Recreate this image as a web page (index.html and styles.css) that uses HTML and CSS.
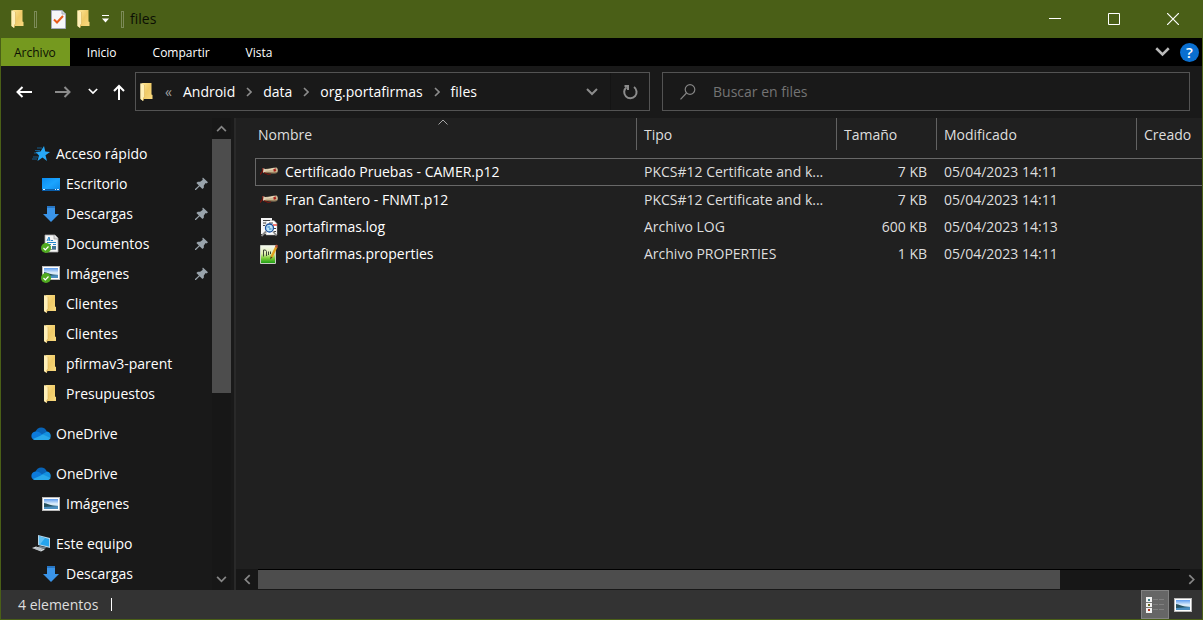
FILE: index.html
```html
<!DOCTYPE html>
<html lang="es">
<head>
<meta charset="utf-8">
<meta name="viewport" content="width=device-width, initial-scale=1">
<title>files</title>
<link rel="stylesheet" href="styles.css">
</head>
<body>
<svg class="defs" aria-hidden="true">
  <defs>
    <linearGradient id="gFolder" x1="0" x2="1" y1="0" y2="1"><stop offset="0" stop-color="#ffe89a"/><stop offset=".5" stop-color="#f0cb68"/><stop offset="1" stop-color="#fbdc83"/></linearGradient>
    <linearGradient id="gBlue" x1="0" x2="1" y1="0" y2="1"><stop offset="0" stop-color="#0a8cf0"/><stop offset=".5" stop-color="#1ba4ff"/><stop offset="1" stop-color="#0b86e6"/></linearGradient>
    <linearGradient id="gSky" x1="0" x2="0" y1="0" y2="1"><stop offset="0" stop-color="#5b9bef"/><stop offset=".5" stop-color="#e3f1fb"/><stop offset="1" stop-color="#7fb0d8"/></linearGradient>
    <linearGradient id="gGreen" x1="0" x2="0" y1="0" y2="1"><stop offset="0" stop-color="#f6f8f2"/><stop offset=".45" stop-color="#dff0b0"/><stop offset=".7" stop-color="#7fce3a"/><stop offset="1" stop-color="#159a12"/></linearGradient>
    <symbol id="folder" viewBox="0 0 12 18"><path d="M2 0H11V11.500L12 12V16H3V18L0 16V1Z" fill="url(#gFolder)"/><path d="M0 0L4 2.500V14L2.500 15V18L0 16Z" fill="#fff0b8"/><path d="M4 2V14L3 15V17" fill="none" stroke="#d9b45b" stroke-width=".6"/></symbol>
    <symbol id="chev-right" viewBox="0 0 6 10"><path d="M1 1L5 5L1 9" fill="none" stroke="currentColor" stroke-width="1.600"/></symbol>
    <symbol id="chev-down" viewBox="0 0 12 8"><path d="M1 1L6 6L11 1" fill="none" stroke="currentColor" stroke-width="2"/></symbol>
    <symbol id="chev-up" viewBox="0 0 12 8"><path d="M1 7L6 2L11 7" fill="none" stroke="currentColor" stroke-width="2"/></symbol>
    <symbol id="arrow" viewBox="0 0 16 12"><path d="M16 6H1.500M6.500 1L1.500 6L6.500 11" fill="none" stroke="currentColor" stroke-width="2"/></symbol>
    <symbol id="pin" viewBox="0 0 14 14"><path d="M8.500 0L14 5L12.500 6.500L11.500 6L9.500 8.500V11L8 12.500L5 9.500L1 13.500H0V12.500L4.200 8.500L1.500 5.800L3 4.500H5.500L8.500 2.500L7.800 1.500Z" fill="#99a3ab"/></symbol>
    <symbol id="down" viewBox="0 0 20 20"><path d="M6 2H14V10H18L10 18L2 10H6Z" fill="#3a94e8"/><path d="M6 2H14V4H6Z" fill="#2876c4"/></symbol>
    <symbol id="desktop" viewBox="0 0 20 20"><path d="M1 4H19V17H1Z" fill="url(#gBlue)"/><path d="M1 15H19V17H1Z" fill="#0a5da8"/><path d="M2 15.500H4M14 15.500H15M16 15.500H18" stroke="#d9efff"/></symbol>
    <symbol id="photo" viewBox="0 0 20 20"><path d="M1 3H19V17H1Z" fill="#b9b9b9"/><path d="M2 4H18V16H2Z" fill="#fff"/><path d="M3 5H17V15H3Z" fill="url(#gSky)"/><path d="M3 9C6 9 9 12 17 12V15H3Z" fill="#25505d"/><path d="M3 13L17 12V15H3Z" fill="#4b8fc0"/></symbol>
    <symbol id="check" viewBox="0 0 10 10"><circle cx="5" cy="5" r="5" fill="#50aa20"/><path d="M2.500 5L4.300 6.800L7.500 3.500" fill="none" stroke="#fff" stroke-width="1.200"/></symbol>
    <symbol id="docs" viewBox="0 0 20 20"><path d="M4 1H14L17 4V18H4Z" fill="#f7f7f7" stroke="#a7a7a7" stroke-width=".8"/><path d="M13 1V5H17" fill="#ddd" stroke="#999" stroke-width=".7"/><path d="M6 7L8 3L9 7M6.500 6H9M10 6.500H12M6 8.500H15M6 10.500H10M12 10.500H15" fill="none" stroke="#2486c9"/><path d="M11 12H15V16H11Z" fill="#3f7395"/><path d="M6 12.500H10M6 15.500H15" stroke="#8195a5"/><use href="#check" x="0" y="9" width="10" height="10"/></symbol>
    <symbol id="photo-ok" viewBox="0 0 20 20"><use href="#photo" y="-1" width="20" height="20"/><use href="#check" x="0" y="9" width="10" height="10"/></symbol>
    <symbol id="cloud" viewBox="0 0 20 14"><path d="M4 6C6 -1 14-1 16 5L10 9Z" fill="#0864b8"/><path d="M4.500 13C-1 13-1 5 4.500 4.500C7 4 10 6 11.500 8L5 13Z" fill="#0c7bdc"/><path d="M16 4.500C21 5 21 13 16 13H10L10 8Z" fill="#1490df"/><path d="M2 12L12 7.500L19.500 11C19 12.500 17.500 13 16 13H4.500C3.500 13 2.500 12.500 2 12Z" fill="#28a8ea"/></symbol>
    <symbol id="star" viewBox="0 0 20 20"><path d="M13 2L14.300 7.500L19 8L14.500 11.200L16 17L11.500 13.500L6.500 17L8 11.500L4.500 8L9.500 7.500Z" fill="#27a7f5"/><path d="M6 4H11M4 6.500H9M3 9H7M2 13H7M1 15H6" stroke="#1678bb" stroke-width=".7"/></symbol>
    <symbol id="pc" viewBox="0 0 20 20"><path d="M7 1L19 4V14L7 11Z" fill="#b6d5e8"/><path d="M8 2.300L18 5V12.600L8 10.300Z" fill="#25a4ed"/><path d="M8 2.300L14 4L9 10.500L8 10.300Z" fill="#62c0f3"/><path d="M9 12L16 13.500L13 15L6 13.500Z" fill="#778791"/><path d="M1 14L5 12.500L14 15.500L10 17.500Z" fill="#dce1e4"/><path d="M3 14.200L10 16.500M5 13.500L12 16" stroke="#8f999f" stroke-width=".6"/></symbol>
    <symbol id="cert" viewBox="0 0 18 20"><path d="M4 7C8 7.500 12 5.500 16.500 5.500C18 6.500 18.500 9 17 11C13 12 9 10.500 4.500 11Z" fill="#c9b793"/><path d="M5 8C9 8.500 12 6.500 16 6.500" stroke="#efe2c6" fill="none"/><path d="M5 10.500C9 10 13 11.500 17 10.500" stroke="#8a7350" fill="none"/><path d="M2.500 6C5 5.500 6 9 5 11L3 10.500Z" fill="#e3d2b8"/><path d="M3 6L2.500 9.500L0 12.500M4 10.500L8 12.500L11 12" stroke="#76150f" fill="none" stroke-width="1.200"/><path d="M13.500 7.500L16 9M15.500 6.500L14 9.500" stroke="#a81d17" stroke-width="1.400"/></symbol>
    <symbol id="log" viewBox="0 0 18 20"><path d="M1 1H12V17H1Z" fill="#f4f4f4"/><path d="M6 3.500H14L17 6.500V18H6Z" fill="#fff" stroke="#999" stroke-width=".5"/><path d="M3 3.500H10M3 6H6M3 8.500H5M9 6H13M14 11.500H16M14 14.500H16" stroke="#444"/><path d="M13 8H17" stroke="#e32" stroke-width="1.300"/><circle cx="9.500" cy="11" r="4" fill="#b9e2f8" stroke="#1c4f9a" stroke-width="1.300"/><path d="M7.500 10H10M9 12H11.500" stroke="#2877bd"/><path d="M6 14.500L1.500 19M13 14.500L16.500 18.500" stroke="#8a8a8a" stroke-width="1.800"/></symbol>
    <symbol id="props" viewBox="0 0 18 20"><path d="M.5 1.500H15.500V19.500H.5Z" fill="url(#gGreen)" stroke="#c9cfc3"/><path d="M3.500 12.500V6H5.500L6.500 7.500V12M8.500 7.500V11M10.500 7.500V10" stroke="#3c4436" stroke-width="1" fill="none"/><path d="M16.500 2.500L11.500 13" stroke="#e0a11e" stroke-width="2.400"/><path d="M17 1L16 3.500" stroke="#b9543a" stroke-width="2.200"/><path d="M10.500 12.500L10.200 15.500L12.500 13.300Z" fill="#583c13"/></symbol>
  </defs>
</svg>

<div class="window">
  <header class="titlebar">
    <div class="quick">
      <svg class="i-folder"><use href="#folder"/></svg>
      <span class="grip"></span>
      <button class="plain" aria-label="Propiedades"><svg width="15" height="19" viewBox="0 0 15 19"><path d="M.5.500H11L14.500 4V18.500H.5Z" fill="#f6f7f9" stroke="#a4a9ba"/><path d="M11 .5V4H14.500" fill="#d9dce5" stroke="#a4a9ba"/><path d="M3 9.500L6 12.500L12 6" fill="none" stroke="#e85c1b" stroke-width="2"/></svg></button>
      <button class="plain" aria-label="Nueva carpeta"><svg class="i-folder"><use href="#folder"/></svg></button>
      <button class="plain" aria-label="Personalizar"><svg width="9" height="8" viewBox="0 0 9 8"><path d="M1 .5H8" stroke="#fff"/><path d="M1 3.500H8L4.500 7.500Z" fill="#fff"/></svg></button>
      <span class="grip"></span>
      <h1 class="title">files</h1>
    </div>
    <div class="caption">
      <button class="plain" aria-label="Minimizar"><svg width="12" height="12"><path d="M0 5.500H12" stroke="#fff"/></svg></button>
      <button class="plain" aria-label="Maximizar"><svg width="12" height="12"><path d="M.5.500H11.500V11.500H.5Z" fill="none" stroke="#fff"/></svg></button>
      <button class="plain" aria-label="Cerrar"><svg width="12" height="12"><path d="M0 0L12 12M12 0L0 12" stroke="#fff" stroke-width="1.200"/></svg></button>
    </div>
  </header>

  <nav class="ribbon" aria-label="Cinta">
    <button class="tab tab-file">Archivo</button>
    <button class="tab">Inicio</button>
    <button class="tab">Compartir</button>
    <button class="tab">Vista</button>
    <div class="ribbon-end">
      <button class="plain" aria-label="Expandir la cinta"><svg class="ribbon-chev"><use href="#chev-down"/></svg></button>
      <button class="help" aria-label="Ayuda">?</button>
    </div>
  </nav>

  <div class="navbar">
    <div class="history">
      <button class="plain" aria-label="Atrás"><svg class="i-arrow"><use href="#arrow"/></svg></button>
      <button class="plain dim" aria-label="Adelante"><svg class="i-arrow flip"><use href="#arrow"/></svg></button>
      <button class="plain" aria-label="Recientes"><svg class="i-recent"><use href="#chev-down"/></svg></button>
      <button class="plain" aria-label="Subir"><svg class="i-up" viewBox="0 0 12 16"><path d="M6 16V2M1 7L6 2L11 7" fill="none" stroke="#fff" stroke-width="2"/></svg></button>
    </div>
    <div class="address">
      <svg class="i-folder"><use href="#folder"/></svg>
      <span class="more">«</span>
      <a href="#">Android</a><svg class="crumb-sep"><use href="#chev-right"/></svg>
      <a href="#">data</a><svg class="crumb-sep"><use href="#chev-right"/></svg>
      <a href="#">org.portafirmas</a><svg class="crumb-sep"><use href="#chev-right"/></svg>
      <a href="#">files</a>
      <button class="plain drop" aria-label="Ubicaciones anteriores"><svg class="i-drop"><use href="#chev-down"/></svg></button>
      <button class="plain refresh" aria-label="Actualizar"><svg width="16" height="16" viewBox="0 0 16 16"><path d="M12 3A6.200 6.200 0 1 1 4.500 3.200M2.500 2H6V6" fill="none" stroke="#8c8c8c" stroke-width="2"/></svg></button>
    </div>
    <label class="search">
      <svg width="16" height="16" viewBox="0 0 16 16"><circle cx="10" cy="5.500" r="4.800" fill="none" stroke="#858585" stroke-width="1.200"/><path d="M6.500 9L.5 15.300" stroke="#858585" stroke-width="1.200"/></svg>
      <input type="search" placeholder="Buscar en files" aria-label="Buscar en files">
    </label>
  </div>

  <main class="body">
    <aside class="side">
      <nav class="tree" aria-label="Panel de navegación">
        <ul>
          <li><a class="root" href="#"><svg class="ico"><use href="#star"/></svg>Acceso rápido</a></li>
          <li><a href="#"><svg class="ico"><use href="#desktop"/></svg>Escritorio<svg class="pin"><use href="#pin"/></svg></a></li>
          <li><a href="#"><svg class="ico"><use href="#down"/></svg>Descargas<svg class="pin"><use href="#pin"/></svg></a></li>
          <li><a href="#"><svg class="ico"><use href="#docs"/></svg>Documentos<svg class="pin"><use href="#pin"/></svg></a></li>
          <li><a href="#"><svg class="ico"><use href="#photo-ok"/></svg>Imágenes<svg class="pin"><use href="#pin"/></svg></a></li>
          <li><a href="#"><svg class="ico ico-folder"><use href="#folder"/></svg>Clientes</a></li>
          <li><a href="#"><svg class="ico ico-folder"><use href="#folder"/></svg>Clientes</a></li>
          <li><a href="#"><svg class="ico ico-folder"><use href="#folder"/></svg>pfirmav3-parent</a></li>
          <li><a href="#"><svg class="ico ico-folder"><use href="#folder"/></svg>Presupuestos</a></li>
        </ul>
        <ul>
          <li><a class="root" href="#"><svg class="ico"><use href="#cloud"/></svg>OneDrive</a></li>
        </ul>
        <ul>
          <li><a class="root" href="#"><svg class="ico"><use href="#cloud"/></svg>OneDrive</a></li>
          <li><a href="#"><svg class="ico"><use href="#photo"/></svg>Imágenes</a></li>
        </ul>
        <ul>
          <li><a class="root" href="#"><svg class="ico"><use href="#pc"/></svg>Este equipo</a></li>
          <li><a href="#"><svg class="ico"><use href="#down"/></svg>Descargas</a></li>
        </ul>
      </nav>
      <div class="vscroll">
        <button class="plain" aria-label="Desplazar arriba"><svg class="i-scroll"><use href="#chev-up"/></svg></button>
        <div class="vtrack"><div class="vthumb"></div></div>
        <button class="plain" aria-label="Desplazar abajo"><svg class="i-scroll"><use href="#chev-down"/></svg></button>
      </div>
    </aside>

    <section class="pane">
      <div class="list">
        <table>
          <colgroup><col class="c-name"><col class="c-type"><col class="c-size"><col class="c-mod"><col></colgroup>
          <thead>
            <tr>
              <th aria-sort="ascending"><div class="head head-name">Nombre<svg class="sort" viewBox="0 0 10 6"><path d="M.5 5.500L5 1L9.500 5.500" fill="none" stroke="#a5a5a5"/></svg></div></th>
              <th><div class="head">Tipo</div></th>
              <th><div class="head">Tamaño</div></th>
              <th><div class="head">Modificado</div></th>
              <th><div class="head head-last">Creado</div></th>
            </tr>
          </thead>
          <tbody>
            <tr class="focused"><td class="name"><div><svg class="f-icon"><use href="#cert"/></svg>Certificado Pruebas - CAMER.p12</div></td><td>PKCS#12 Certificate and k...</td><td class="size">7 KB</td><td>05/04/2023 14:11</td><td></td></tr>
            <tr><td class="name"><div><svg class="f-icon"><use href="#cert"/></svg>Fran Cantero - FNMT.p12</div></td><td>PKCS#12 Certificate and k...</td><td class="size">7 KB</td><td>05/04/2023 14:11</td><td></td></tr>
            <tr><td class="name"><div><svg class="f-icon"><use href="#log"/></svg>portafirmas.log</div></td><td>Archivo LOG</td><td class="size">600 KB</td><td>05/04/2023 14:13</td><td></td></tr>
            <tr><td class="name"><div><svg class="f-icon"><use href="#props"/></svg>portafirmas.properties</div></td><td>Archivo PROPERTIES</td><td class="size">1 KB</td><td>05/04/2023 14:11</td><td></td></tr>
          </tbody>
        </table>
      </div>
      <div class="hscroll">
        <button class="plain" aria-label="Desplazar a la izquierda"><svg class="i-side flip"><use href="#chev-right"/></svg></button>
        <div class="htrack"><div class="hthumb"></div></div>
        <button class="plain" aria-label="Desplazar a la derecha"><svg class="i-side"><use href="#chev-right"/></svg></button>
      </div>
    </section>
  </main>

  <footer class="status">
    <span class="count">4 elementos</span>
    <div class="views">
      <button class="view view-on" aria-label="Detalles"><svg width="18" height="16" viewBox="0 0 18 16"><path d="M0 0H6V16H0Z" fill="#f2f2f2"/><path d="M0 5.500H6M0 10.500H6" stroke="#777"/><path d="M2 2H4V4H2Z" fill="#3d7c83"/><path d="M2 7H4V9H2Z" fill="#6c6b1f"/><path d="M2 12H4V14H2Z" fill="#b43522"/><path d="M7 2.500H12M13 2.500H18M7 7.500H12M13 7.500H18M7 12.500H12M13 12.500H18" stroke="#808080"/></svg></button>
      <button class="view" aria-label="Vistas en miniatura"><svg class="ico"><use href="#photo"/></svg></button>
    </div>
  </footer>
</div>
</body>
</html>
```
FILE: styles.css
```css
* { box-sizing: border-box; }

body {
  margin: 0;
  background: #191919;
  color: #fff;
  font: 14px/20px "Segoe UI", "Open Sans", "Noto Sans", sans-serif;
}

a { color: inherit; text-decoration: none; }
svg { display: block; flex: none; }
button { font: inherit; color: inherit; }
ul { list-style: none; margin: 0; padding: 0; }

.defs { position: absolute; width: 0; height: 0; }

.window {
  display: flex;
  flex-direction: column;
  height: 100vh;
  border: 1px solid #4a5f17;
  border-top: 0;
  overflow: hidden;
}

.plain {
  display: flex;
  align-items: center;
  justify-content: center;
  padding: 0;
  border: 0;
  background: none;
}

.i-folder { width: 13px; height: 18px; }
.flip { transform: scaleX(-1); }

/* Title bar */
.titlebar {
  display: flex;
  flex: none;
  justify-content: space-between;
  height: 38px;
  background: #4a5f17;
}
.quick { display: flex; align-items: center; gap: 11px; padding-left: 10px; }
.grip {
  width: 3px;
  height: 17px;
  border: 1px solid #7c8b58;
}
.quick .grip:first-of-type { margin: 0 3px 0 -1px; }
.title { margin: 0 0 0 -5px; color: #0c0f04; font-size: 14px; font-weight: 400; }
.caption { display: flex; }
.caption .plain { width: 59px; }

/* Ribbon tabs */
.ribbon {
  display: flex;
  flex: none;
  height: 28px;
  background: #000;
  font-size: 12px;
}
.tab { padding: 1px 19px 0 17px; border: 0; background: none; }
.tab-file { padding: 1px 14px 0 13px; background: #75991f; color: #0c0f04; }
.ribbon-end {
  display: flex;
  align-items: center;
  gap: 10px;
  margin-left: auto;
  padding-right: 3px;
  color: #b9b9b9;
}
.ribbon-chev { width: 15px; height: 10px; }
.help {
  width: 19px;
  height: 19px;
  padding: 0;
  border: 0;
  border-radius: 50%;
  background: #0a6fd0;
  color: #fff;
  font-size: 15px;
  font-weight: 600;
  line-height: 19px;
}

/* Navigation bar */
.navbar {
  display: grid;
  flex: none;
  grid-template-columns: 122px minmax(0, 515fr) minmax(0, 528fr);
  gap: 12px;
  padding: 6px 12px 7px 0;
}
.history { display: flex; align-items: center; padding-left: 15px; }
.history .plain { margin-right: 15px; }
.history .dim { margin: 0 17px 0 8px; color: #8b8b8b; }
.i-arrow { width: 16px; height: 12px; }
.i-recent { width: 10px; height: 7px; }
.i-up { width: 12px; height: 16px; }

.address, .search {
  display: flex;
  align-items: center;
  height: 39px;
  border: 1px solid #535353;
}
.address { padding-left: 4px; }
.more { margin: 0 11px 0 12px; color: #a0a0a0; }
.crumb-sep { width: 6px; height: 10px; margin: 0 11px; color: #8c8c8c; }
.drop { width: 36px; margin-left: auto; color: #8c8c8c; }
.i-drop { width: 12px; height: 8px; }
.refresh { width: 39px; height: 37px; border-left: 1px solid #141414; }
.search { gap: 17px; padding: 0 17px; }
.search input {
  flex: 1;
  min-width: 0;
  padding: 0;
  border: 0;
  outline: 0;
  background: none;
  color: #fff;
  font: inherit;
}
.search input::placeholder { color: #747474; opacity: 1; }

/* Navigation tree */
.body { display: flex; flex: 1; min-height: 0; }
.side {
  display: flex;
  flex: none;
  width: 235px;
  padding-right: 3px;
  border-right: 2px solid #292929;
}
.tree { flex: 1; min-width: 0; padding-top: 21px; overflow: hidden; }
.tree ul + ul { margin-top: 10px; }
.tree a {
  display: flex;
  align-items: center;
  gap: 5px;
  height: 30px;
  padding: 0 4px 0 40px;
}
.tree a.root { padding-left: 30px; }
.ico { width: 20px; height: 20px; }
.ico-folder { height: 18px; padding: 0 5px 0 3px; }
.pin { width: 13px; height: 14px; margin-left: auto; }

.vscroll {
  display: flex;
  flex: none;
  flex-direction: column;
  width: 19px;
  background: #171717;
  color: #858585;
}
.vscroll .plain { height: 21px; }
.vtrack { flex: 1; }
.vthumb { height: 59%; background: #4d4d4d; }
.i-scroll { width: 11px; height: 7px; }

/* File list */
.pane {
  display: flex;
  flex: 1;
  flex-direction: column;
  min-width: 0;
  background: #202020;
}
.list { flex: 1; padding-left: 19px; overflow: hidden; }
table {
  width: calc(100% + 20px);
  border-spacing: 0;
  table-layout: fixed;
  color: #dedede;
}
.c-name { width: 382px; }
.c-type, .c-mod { width: 200px; }
.c-size { width: 100px; }
th {
  height: 40px;
  padding: 0;
  font-weight: 400;
  text-align: left;
  vertical-align: top;
}
.head {
  height: 32px;
  padding-left: 7px;
  border-right: 1px solid #626262;
  line-height: 34px;
}
.head-name { position: relative; padding-left: 3px; }
.head-last { border-right: 0; }
.sort {
  position: absolute;
  top: 1px;
  left: 50%;
  width: 10px;
  height: 6px;
  margin-left: -8px;
}
td {
  height: 27px;
  padding: 0 7px;
  overflow: hidden;
  white-space: nowrap;
}
td.name { padding: 0 5px; color: #fff; }
td.name div { display: flex; align-items: center; gap: 7px; }
td.size { padding-right: 10px; text-align: right; }
.focused { outline: 1px solid #686868; outline-offset: -1px; }
.focused td { height: 28px; }
.f-icon { width: 18px; height: 20px; }

.hscroll {
  display: flex;
  flex: none;
  height: 21px;
  background: #171717;
  color: #858585;
}
.hscroll .plain { width: 22px; }
.htrack { flex: 1; border-top: 1px solid #000; }
.hthumb { width: 87%; height: 19px; background: #4d4d4d; }
.i-side { width: 7px; height: 11px; }

/* Status bar */
.status {
  display: flex;
  flex: none;
  align-items: center;
  height: 29px;
  padding-left: 17px;
  background: #333;
  color: #dedede;
}
.count {
  padding-right: 13px;
  border-right: 1px solid #fff;
  line-height: 13px;
}
.views { display: flex; height: 100%; margin-left: auto; padding-right: 5px; }
.view {
  display: flex;
  align-items: center;
  justify-content: center;
  width: 28px;
  padding: 0;
  border: 0;
  background: none;
}
.view-on { border: 1px solid #828282; background: #666; }
```
